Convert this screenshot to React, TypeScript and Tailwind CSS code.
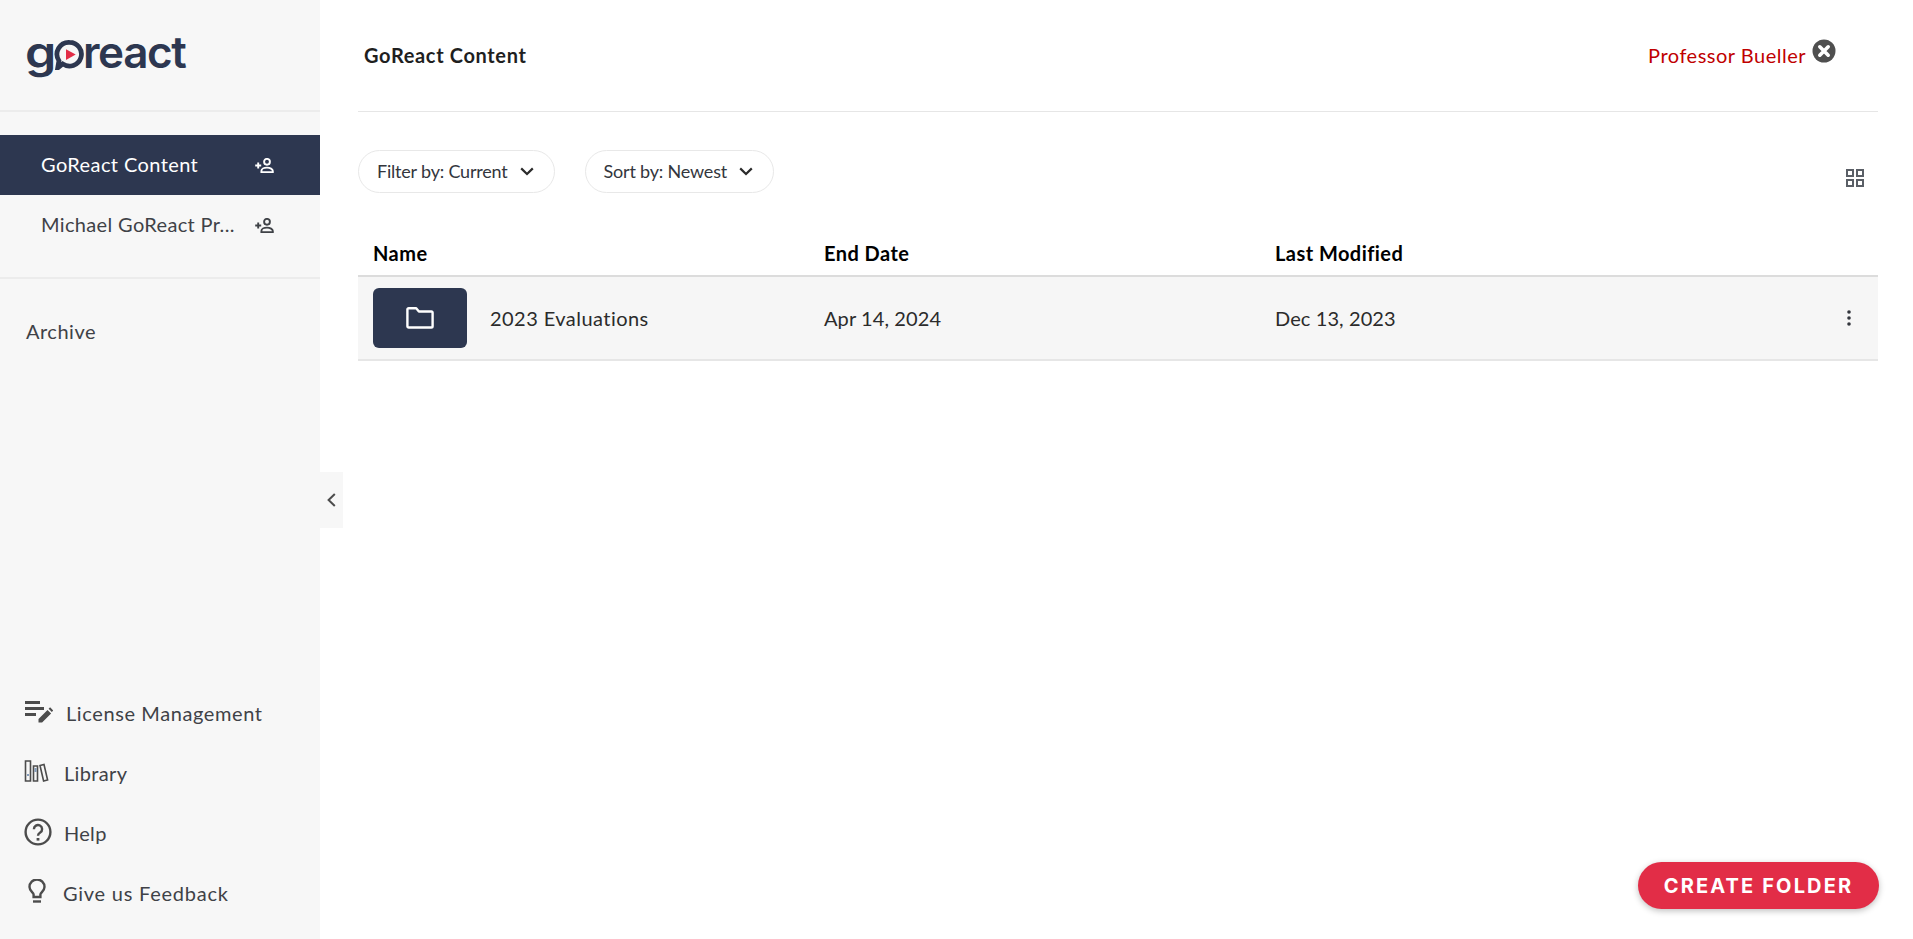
import React from 'react';

const navy = '#2d3750';

const AddUserIcon = ({ className }: { className?: string }) => (
  <svg viewBox="0 0 20 15" className={className} fill="none" stroke="currentColor" strokeWidth="1.9">
    <path d="M0.2 7.500h6M3.200 4.500v6" />
    <circle cx="12" cy="3.800" r="2.900" />
    <path d="M6.400 14.100v-1.200c0-1.800 2.500-3.300 5.600-3.300s5.800 1.500 5.800 3.300v1.200z" />
  </svg>
);

const Chevron = () => (
  <svg viewBox="0 0 14 9" className="w-[14px] h-[9px]" fill="none" stroke="#2b2b2b" strokeWidth="2.2">
    <path d="M1.200 1.400 7 7l5.800-5.600" />
  </svg>
);

const Logo = () => (
  <div className="flex items-baseline font-['Inter',sans-serif] font-semibold text-[44px] leading-none tracking-[-1.4px] text-[#2d3750]">
    <span className="inline-block w-[29px] origin-left scale-x-[1.14]">g</span>
    <svg viewBox="0 0 30 30" className="w-[31px] h-[31px] -mr-[2px] self-center translate-y-[2px]">
      <path d="M15 3.200a11.500 11.500 0 1 1-6.600 20.900L3.600 28l1.200-7A11.500 11.500 0 0 1 15 3.200z" fill="none" stroke={navy} strokeWidth="4.600" />
      <path d="M11.600 9.800 21 15l-9.400 5.400z" fill="#e22d47" />
    </svg>
    <span>react</span>
  </div>
);

const NavBottomRow = ({ icon, label, rowClass }: { icon: React.ReactNode; label: string; rowClass: string }) => (
  <div className={`flex items-center h-[60px] pl-[24px] text-[20px] text-[#3f4247] ${rowClass}`}>
    {icon}
    <span>{label}</span>
  </div>
);

export default function App() {
  return (
    <div className="relative flex h-[939px] w-full overflow-hidden bg-white font-['Lato',sans-serif]">
      <aside className="w-[320px] shrink-0 flex flex-col bg-[#f7f7f7]">
        <div className="h-[112px] shrink-0 border-b-2 border-[#ececec] pl-[25px] pt-[30px]">
          <Logo />
        </div>
        <div className="mt-[23px] pb-[22px] border-b-2 border-[#ececec]">
          <div className="flex items-center justify-between h-[60px] pl-[41px] pr-[45px] bg-[#2d3750] text-white text-[20px] tracking-[0.4px]">
            <span className="pb-[2px]">GoReact Content</span>
            <AddUserIcon className="w-[20px] h-[15px]" />
          </div>
          <div className="flex items-center justify-between h-[60px] pl-[41px] pr-[45px] text-[#3f4247] text-[20px] tracking-[0.35px]">
            <span className="pb-[2px]">Michael GoReact Pr...</span>
            <AddUserIcon className="w-[20px] h-[15px]" />
          </div>
        </div>
        <div className="pl-[26px] mt-[38px] text-[20px] leading-[28px] tracking-[0.5px] text-[#3f4247]">Archive</div>
        <div className="mt-auto pb-[16px]">
          <NavBottomRow
            rowClass="gap-[13px] tracking-[0.6px]"
            label="License Management"
            icon={
              <svg viewBox="0 0 29 24" className="w-[29px] h-[24px] -translate-y-[2px]" fill="#4c4c4c">
                <path d="M1 2h15v3H1zM1 8h19v3H1zM1 14h11v3H1z" />
                <path d="M14.500 23.500v-3.600l9-9 3.600 3.600-9 9zM24.600 9.800l1.500-1.500 3.200 3.200-1.500 1.500z" />
              </svg>
            }
          />
          <NavBottomRow
            rowClass="gap-[15px] tracking-[0.35px]"
            label="Library"
            icon={
              <svg viewBox="0 0 25 22" className="w-[25px] h-[22px] -translate-y-[2px]" fill="none" strokeWidth="1.600">
                <g stroke="#4c4c4c">
                  <path d="M1.500 1h5v20h-5zM9.500 6h4v15h-4zM16 5.500l4-1 3.600 15.500-4 1z" />
                </g>
                <path d="M3 15h2M10.500 9h2M10.500 11h2" stroke="#5f7fa8" />
              </svg>
            }
          />
          <NavBottomRow
            rowClass="gap-[12px] tracking-[0.3px]"
            label="Help"
            icon={
              <svg viewBox="0 0 28 28" className="w-[28px] h-[28px] -translate-y-[1px]" fill="none" stroke="#4c4c4c">
                <circle cx="14" cy="14" r="12.400" strokeWidth="2.400" />
                <path d="M9.900 11.200a4.100 4.100 0 1 1 6.300 3.400c-1.400.9-2.200 1.600-2.200 3.200" strokeWidth="2.400" />
                <path d="M12.600 20h2.800v2.600h-2.800z" fill="#4c4c4c" stroke="none" />
              </svg>
            }
          />
          <NavBottomRow
            rowClass="gap-[17px] tracking-[0.75px]"
            label="Give us Feedback"
            icon={
              <svg viewBox="0 0 18 24" className="w-[18px] h-[24px] ml-[4px] -translate-y-[2px]" fill="none" stroke="#4c4c4c" strokeWidth="2.400">
                <path d="M5.600 18v-2.400C5.600 13.600 1.500 12 1.500 8a7.500 7.500 0 0 1 15 0c0 4-4.100 5.600-4.100 7.600V18z" />
                <path d="M5 22.500h8" />
              </svg>
            }
          />
        </div>
      </aside>

      <div className="absolute left-[320px] top-[472px] w-[23px] h-[56px] bg-[#f7f7f7] flex items-center justify-center">
        <svg viewBox="0 0 9 14" className="w-[9px] h-[14px]" fill="none" stroke="#4c4c4c" strokeWidth="2">
          <path d="M7.800 1 1.600 7l6.200 6" />
        </svg>
      </div>

      <main className="flex-1 pl-[38px] pr-[35px]">
        <header className="flex items-center justify-between h-[112px] border-b border-[#e6e6e6] pl-[6px] pr-[42px]">
          <h1 className="font-bold text-[20px] tracking-[0.65px] pb-[2px] text-[#1f1f1f]">GoReact Content</h1>
          <div className="flex items-start gap-[6px]">
            <span className="text-[20px] leading-[28px] tracking-[0.5px] pb-[2px] text-[#c00000]">Professor Bueller</span>
            <svg viewBox="0 0 24 24" className="w-[24px] h-[24px] -mt-[2px]">
              <circle cx="12" cy="12" r="11.500" fill="#4f4f4f" />
              <path d="M7.800 7.800l8.400 8.400M16.200 7.800l-8.400 8.400" stroke="#fff" strokeWidth="3.600" strokeLinecap="round" />
            </svg>
          </div>
        </header>

        <div className="flex items-start justify-between pt-[38px]">
          <div className="flex gap-[30px]">
            <button className="flex items-center gap-[12px] h-[43px] pl-[18px] pr-[20px] rounded-full border border-[#e8e8e8] text-[18px] tracking-[-0.2px] text-[#33363d]">
              Filter by: Current
              <Chevron />
            </button>
            <button className="flex items-center gap-[12px] h-[43px] pl-[18px] pr-[20px] rounded-full border border-[#e8e8e8] text-[18px] tracking-[-0.2px] text-[#33363d]">
              Sort by: Newest
              <Chevron />
            </button>
          </div>
          <svg viewBox="0 0 18 18" className="w-[18px] h-[18px] mt-[19px] mr-[14px]" fill="none" stroke="#5a5f66" strokeWidth="2">
            <path d="M1 1h6v6H1zM11 1h6v6h-6zM1 11h6v6H1zM11 11h6v6h-6z" />
          </svg>
        </div>

        <div className="grid grid-cols-[451px_451px_1fr] items-center h-[47px] mt-[37px] px-[15px] border-b-2 border-[#dcdcdc] text-[20px] font-bold tracking-[0.45px] text-black">
          <span>Name</span>
          <span>End Date</span>
          <span>Last Modified</span>
        </div>
        <div className="grid grid-cols-[451px_451px_1fr] items-center h-[84px] px-[15px] bg-[#f6f6f6] border-b-2 border-[#e6e6e6] text-[20px] text-[#2b2b2b]">
          <div className="flex items-center gap-[23px]">
            <div className="flex items-center justify-center w-[94px] h-[60px] rounded-[6px] bg-[#2d3750]">
              <svg viewBox="0 0 28 22" className="w-[28px] h-[22px]" fill="none" stroke="#fff" strokeWidth="2.400" strokeLinejoin="round">
                <path d="M1.400 2.600a1.300 1.300 0 0 1 1.300-1.300h7.500l2.700 3.200h12.400a1.300 1.300 0 0 1 1.300 1.300v13.400a1.300 1.300 0 0 1-1.300 1.300H2.700a1.300 1.300 0 0 1-1.300-1.300z" />
              </svg>
            </div>
            <span className="tracking-[0.45px]">2023 Evaluations</span>
          </div>
          <span className="tracking-[0.1px]">Apr 14, 2024</span>
          <div className="flex items-center justify-between">
            <span className="tracking-[0.1px]">Dec 13, 2023</span>
            <svg viewBox="0 0 4 16" className="w-[4px] h-[16px] mr-[12px]" fill="#33363d">
              <circle cx="2" cy="2" r="1.800" />
              <circle cx="2" cy="8" r="1.800" />
              <circle cx="2" cy="14" r="1.800" />
            </svg>
          </div>
        </div>
      </main>

      <button className="absolute right-[34px] bottom-[30px] w-[241px] h-[47px] rounded-full bg-[#e22d47] text-white font-['Inter',sans-serif] font-bold text-[20px] tracking-[2.15px] shadow-[0_2px_6px_rgba(0,0,0,0.25)]">
        CREATE FOLDER
      </button>
    </div>
  );
}
